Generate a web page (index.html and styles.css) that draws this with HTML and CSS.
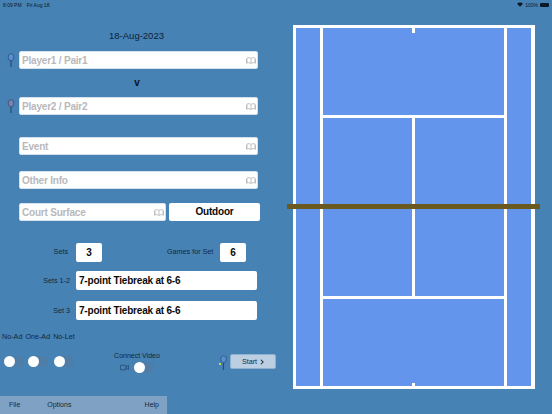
FILE: index.html
```html
<!DOCTYPE html>
<html lang="en">
<head>
    <meta charset="UTF-8">
    <meta name="viewport" content="width=device-width, initial-scale=1.0">
    <title>New Match</title>
    <link rel="stylesheet" href="styles.css">
</head>
<body>
    <div class="status-bar">
        <div class="status-left">
            <span>8:09 PM</span>
            <span>Fri Aug 18</span>
        </div>
        <div class="status-right">
            <svg class="wifi-icon" viewBox="0 0 12 9"><path d="M6 9 0 3a8.500 8.500 0 0 1 12 0z"/></svg>
            <span>100%</span>
            <span class="battery"></span>
        </div>
    </div>

    <div class="screen">
        <div class="setup">
            <div class="match-date">18-Aug-2023</div>

            <div class="player-row first">
                <svg class="racket p1" viewBox="0 0 8 14"><ellipse cx="4" cy="4.200" rx="2.800" ry="3.600"/><path class="grip" d="M4 7.800V14"/></svg>
                <div class="field">
                    <span class="placeholder">Player1 / Pair1</span>
                    <svg class="book-icon" viewBox="0 0 10 7"><path d="M5 1.500C4 .5 2 .5 1 1V6C2 5.500 4 5.500 5 6.500 6 5.500 8 5.500 9 6V1C8 .5 6 .5 5 1.500ZM5 1.500V6.500M.5 2V6.500M9.500 2V6.500"/></svg>
                </div>
            </div>

            <div class="versus">v</div>

            <div class="player-row second">
                <svg class="racket p2" viewBox="0 0 8 14"><ellipse cx="4" cy="4.200" rx="2.800" ry="3.600"/><path class="grip" d="M4 7.800V14"/></svg>
                <div class="field">
                    <span class="placeholder">Player2 / Pair2</span>
                    <svg class="book-icon" viewBox="0 0 10 7"><path d="M5 1.500C4 .5 2 .5 1 1V6C2 5.500 4 5.500 5 6.500 6 5.500 8 5.500 9 6V1C8 .5 6 .5 5 1.500ZM5 1.500V6.500M.5 2V6.500M9.500 2V6.500"/></svg>
                </div>
            </div>

            <div class="field event-field">
                <span class="placeholder">Event</span>
                <svg class="book-icon" viewBox="0 0 10 7"><path d="M5 1.500C4 .5 2 .5 1 1V6C2 5.500 4 5.500 5 6.500 6 5.500 8 5.500 9 6V1C8 .5 6 .5 5 1.500ZM5 1.500V6.500M.5 2V6.500M9.500 2V6.500"/></svg>
            </div>

            <div class="field info-field">
                <span class="placeholder">Other Info</span>
                <svg class="book-icon" viewBox="0 0 10 7"><path d="M5 1.500C4 .5 2 .5 1 1V6C2 5.500 4 5.500 5 6.500 6 5.500 8 5.500 9 6V1C8 .5 6 .5 5 1.500ZM5 1.500V6.500M.5 2V6.500M9.500 2V6.500"/></svg>
            </div>

            <div class="surface-row">
                <div class="field surface-field">
                    <span class="placeholder">Court Surface</span>
                    <svg class="book-icon" viewBox="0 0 10 7"><path d="M5 1.500C4 .5 2 .5 1 1V6C2 5.500 4 5.500 5 6.500 6 5.500 8 5.500 9 6V1C8 .5 6 .5 5 1.500ZM5 1.500V6.500M.5 2V6.500M9.500 2V6.500"/></svg>
                </div>
                <div class="outdoor-btn">Outdoor</div>
            </div>

            <div class="setting-row sets-row">
                <span class="setting-label">Sets</span>
                <div class="number-box">3</div>
                <span class="games-label">Games for Set</span>
                <div class="number-box">6</div>
            </div>

            <div class="setting-row tiebreak-first">
                <span class="setting-label">Sets 1-2</span>
                <div class="tiebreak-box">7-point Tiebreak at 6-6</div>
            </div>

            <div class="setting-row tiebreak-second">
                <span class="setting-label">Set 3</span>
                <div class="tiebreak-box">7-point Tiebreak at 6-6</div>
            </div>

            <div class="controls">
                <div class="rule-switches">
                    <div class="rule-labels">
                        <span class="rule-label">No-Ad</span>
                        <span class="rule-label">One-Ad</span>
                        <span class="rule-label">No-Let</span>
                    </div>
                    <div class="rule-toggles">
                        <div class="toggle"><div class="knob"></div></div>
                        <div class="toggle"><div class="knob"></div></div>
                        <div class="toggle"><div class="knob"></div></div>
                    </div>
                </div>
                <div class="video-switch">
                    <span class="video-label">Connect Video</span>
                    <div class="video-row">
                        <svg class="camera-icon" viewBox="0 0 10 7"><path d="M.5 1h6v5h-6zM6.500 3 9.500 1.200V5.800L6.500 4"/></svg>
                        <div class="toggle"><div class="knob"></div></div>
                    </div>
                </div>
                <div class="start-group">
                    <svg class="racket p3" viewBox="0 0 8 14"><ellipse cx="4.500" cy="4.200" rx="2.800" ry="3.600"/><path class="grip" d="M4.500 7.800V15"/><rect class="ball" x="0" y="8" width="2" height="2"/></svg>
                    <div class="start-btn">Start <svg class="chevron" viewBox="0 0 5 8"><path d="M1 1 4 4 1 7"/></svg></div>
                </div>
            </div>

            <div class="menu-bar">
                <span>File</span>
                <span>Options</span>
                <span class="menu-help">Help</span>
            </div>
        </div>

        <div class="court-area">
            <div class="court">
                <div class="alley left-alley"></div>
                <div class="backcourt"></div>
                <div class="alley right-alley"></div>
                <div class="service-box"></div>
                <div class="service-box"></div>
                <div class="backcourt"></div>
                <div class="center-mark top-mark"></div>
                <div class="center-mark bottom-mark"></div>
                <div class="net"></div>
            </div>
        </div>
    </div>
</body>
</html>
```

FILE: styles.css
```css
* {
    box-sizing: border-box;
    margin: 0;
    padding: 0;
}

body {
    width: 552px;
    height: 414px;
    overflow: hidden;
    font-family: "Liberation Sans", Arial, sans-serif;
    background-color: #4682b4;
    color: #14283c;
}

.status-bar {
    display: flex;
    justify-content: space-between;
    align-items: center;
    height: 9px;
    padding: 0 3px;
    font-size: 5px;
    color: #0c1a28;
}

.status-left {
    display: flex;
    gap: 5px;
}

.status-right {
    display: flex;
    align-items: center;
    gap: 2px;
}

.wifi-icon {
    width: 6px;
    height: 5px;
    fill: #0c1a28;
}

.battery {
    width: 9px;
    height: 4px;
    background-color: #0c1a28;
    border-radius: 1px;
}

.screen {
    display: flex;
    height: 405px;
}

.setup {
    width: 287px;
    display: flex;
    flex-direction: column;
}

.match-date {
    margin-top: 20px;
    width: 273px;
    text-align: center;
    font-size: 9.500px;
    line-height: 14px;
    color: #0f2035;
}

.player-row {
    display: flex;
    align-items: center;
}

.player-row.first {
    margin-top: 8px;
}

.player-row.second {
    margin-top: 8px;
}

.racket {
    width: 8px;
    height: 14px;
    margin: 0 4px 0 7px;
    overflow: visible;
}

.racket ellipse {
    fill: #5b8fd0;
    stroke: #2f5c94;
    stroke-width: 1;
}

.racket .grip {
    stroke: #2b4a70;
    stroke-width: 1.200;
    fill: none;
}

.racket.p2 ellipse {
    fill: #6f86b4;
    stroke: #55507c;
}

.racket .ball {
    fill: #c8d84c;
}

.field {
    display: flex;
    justify-content: space-between;
    align-items: center;
    width: 239px;
    height: 18px;
    padding: 0 1px 0 2px;
    background-color: white;
    border: 1px solid #d4e0ec;
    border-radius: 2px;
}

.placeholder {
    font-size: 10px;
    font-weight: bold;
    letter-spacing: -0.2px;
    color: #b8b8bc;
}

.book-icon {
    width: 10px;
    height: 7px;
    fill: none;
    stroke: #b4b4b8;
    stroke-width: 0.8;
}

.versus {
    margin: 8px 0 0 18px;
    width: 238px;
    height: 12px;
    text-align: center;
    font-size: 10px;
    font-weight: bold;
    line-height: 12px;
    color: #0a1420;
}

.event-field {
    margin: 22px 0 0 19px;
}

.info-field {
    margin: 16px 0 0 19px;
}

.surface-row {
    display: flex;
    gap: 3px;
    margin: 14px 0 0 19px;
}

.surface-field {
    width: 147px;
}

.outdoor-btn {
    width: 91px;
    height: 18px;
    background-color: white;
    border-radius: 2px;
    text-align: center;
    font-size: 10px;
    font-weight: bold;
    letter-spacing: -0.2px;
    line-height: 18px;
    color: #0a0a0a;
}

.setting-row {
    display: flex;
    align-items: center;
    gap: 6px;
    font-size: 7.200px;
}

.sets-row {
    margin-top: 22px;
}

.tiebreak-first {
    margin-top: 9px;
}

.tiebreak-second {
    margin-top: 11px;
}

.setting-label {
    width: 70px;
    text-align: right;
}

.sets-row .setting-label {
    margin-bottom: 3px;
    padding-right: 2px;
}

.number-box {
    width: 26px;
    height: 19px;
    background-color: white;
    border-radius: 2px;
    text-align: center;
    font-size: 10px;
    font-weight: bold;
    line-height: 19px;
    color: #0a0a0a;
}

.games-label {
    width: 49px;
    margin: 0 -2px 3px 59px;
    white-space: nowrap;
}

.tiebreak-box {
    width: 181px;
    height: 19px;
    padding-left: 3px;
    background-color: white;
    border-radius: 2px;
    font-size: 10px;
    font-weight: bold;
    letter-spacing: -0.2px;
    line-height: 19px;
    color: #0a0a0a;
}

.controls {
    display: flex;
    align-items: flex-start;
    height: 63px;
    margin-top: 13px;
}

.rule-switches {
    width: 114px;
}

.rule-labels {
    display: flex;
    gap: 3px;
    padding-left: 2px;
    font-size: 7.200px;
    line-height: 8px;
}

.rule-toggles {
    display: flex;
    gap: 4px;
    margin: 15px 0 0 4px;
}

.rule-toggles .toggle:last-child {
    margin-left: 2px;
}

.toggle {
    width: 20px;
    height: 11px;
    background-color: rgba(90, 120, 150, 0.4);
    border-radius: 6px;
}

.knob {
    width: 11px;
    height: 11px;
    background-color: white;
    border-radius: 50%;
}

.video-switch {
    width: 46px;
    margin-top: 19px;
    text-align: center;
}

.video-label {
    display: block;
    font-size: 7px;
    line-height: 8px;
    white-space: nowrap;
}

.video-row {
    display: flex;
    align-items: center;
    gap: 5px;
    margin: 2px 0 0 6px;
}

.camera-icon {
    width: 9px;
    height: 7px;
    fill: none;
    stroke: #24476e;
    stroke-width: 0.8;
}

.start-group {
    display: flex;
    align-items: center;
    margin: 21px 0 0 59px;
}

.start-group .racket {
    margin: 0 3px 0 0;
}

.start-btn {
    display: flex;
    justify-content: center;
    align-items: center;
    gap: 3px;
    width: 46px;
    height: 15px;
    background-color: #bccfe2;
    border: 1px solid #8fb0cf;
    border-radius: 2px;
    font-size: 7.200px;
}

.chevron {
    width: 4px;
    height: 6px;
    fill: none;
    stroke: #14283c;
    stroke-width: 1.400;
}

.menu-bar {
    display: flex;
    gap: 27px;
    width: 167px;
    height: 18px;
    padding: 0 8px 0 9px;
    background-color: #7fa2c4;
    font-size: 7px;
    line-height: 18px;
}

.menu-help {
    margin-left: auto;
}

.court-area {
    flex: 1;
    padding: 16px 0 0 6px;
}

.court {
    position: relative;
    display: grid;
    grid-template-columns: 24px 89px 89px 24px;
    grid-template-rows: 87px 178px 87px;
    gap: 3px;
    width: 242px;
    height: 364px;
    padding: 3px;
    background-color: white;
}

.alley {
    background-color: #6495ed;
    grid-row: 1 / 4;
}

.left-alley {
    grid-column: 1;
}

.right-alley {
    grid-column: 4;
}

.backcourt {
    grid-column: 2 / 4;
    background-color: #6495ed;
}

.service-box {
    background-color: #6495ed;
}

.center-mark {
    position: absolute;
    left: 119px;
    width: 3px;
    background-color: white;
}

.top-mark {
    top: 3px;
    height: 5px;
}

.bottom-mark {
    bottom: 3px;
    height: 3px;
}

.net {
    position: absolute;
    left: -6px;
    top: 179px;
    width: 253px;
    height: 5px;
    background-color: #6b5a20;
}
```
